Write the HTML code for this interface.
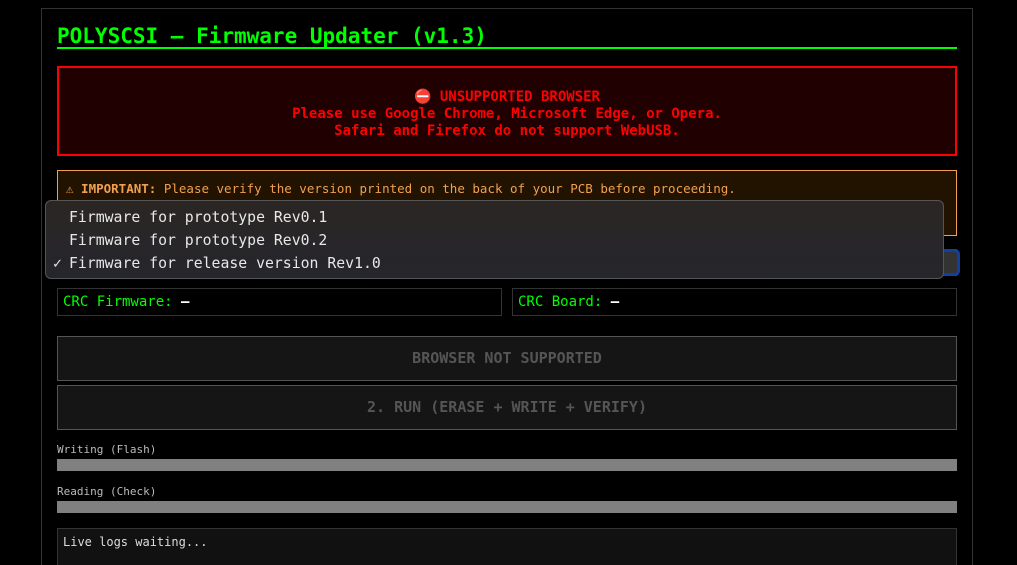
<!DOCTYPE html>
<html style="width:1017px;height:565px;overflow:hidden"><head><meta charset="utf-8"><style>
*{box-sizing:border-box;margin:0;padding:0}
body{width:1017px;height:565px;background:#000;overflow:hidden;position:relative;font-family:"DejaVu Sans Mono","Liberation Mono",monospace}
.wrap{position:absolute;left:41px;top:8px;width:932px;height:557px;border:1px solid #333;border-bottom:none;background:#000}
.abs{position:absolute}
h1{position:absolute;left:57px;top:22px;font-size:21px;font-weight:bold;color:#00ff00;line-height:28px;white-space:nowrap}
.gl{left:57px;top:47px;width:900px;height:2px;background:#00ff00}
.red{left:57px;top:66px;width:900px;height:90px;border:2px solid #ff0000;background:#200000;color:#ff0000;font-weight:bold;font-size:14px;text-align:center;line-height:17px;padding-top:21px}
.org{left:57px;top:170px;width:900px;height:66px;border:1px solid #f0a050;background:#221200;color:#f0a050;font-size:12.5px;padding:10px 8px}
.sel{left:57px;top:249px;width:900px;height:27px;border:1px solid #555;background:#111}
.focus{left:940px;top:249px;width:20px;height:27px;border:3px solid #1040a0;border-radius:5px;background:#333}
.menu{left:45px;top:200px;width:899px;height:79px;background:linear-gradient(#2b2624,#25262c);border:1px solid #555;border-radius:6px;color:#e8e8e8;font-size:14.8px;line-height:23px;padding-top:5px}
.menu div{padding-left:23px;white-space:nowrap;position:relative}
.crc{top:288px;height:28px;border:1px solid #333;background:#000;color:#00ff00;font-size:14px;line-height:27px;padding-left:5px}
.crc b{color:#fff;font-weight:bold}
.btn{left:57px;width:900px;height:45px;border:1px solid #555;background:#151515;color:#555;font-weight:bold;font-size:15px;text-align:center;line-height:43px}
.lbl{left:57px;font-size:11px;color:#bbb}
.bar{left:57px;width:900px;height:12px;background:#808080}
.log{left:57px;top:528px;width:900px;height:50px;border:1px solid #333;background:#111;color:#ddd;font-size:12px;padding:6px 5px}
</style></head><body>
<div class="wrap"></div>
<h1>POLYSCSI – Firmware Updater (v1.3)</h1>
<div class="abs gl"></div>
<div class="abs red"><div>⛔ UNSUPPORTED BROWSER</div><div>Please use Google Chrome, Microsoft Edge, or Opera.</div><div>Safari and Firefox do not support WebUSB.</div></div>
<div class="abs org"><b>⚠ IMPORTANT:</b> Please verify the version printed on the back of your PCB before proceeding.</div>
<div class="abs sel"></div>
<div class="abs focus"></div>
<div class="abs menu"><div>Firmware for prototype Rev0.1</div><div>Firmware for prototype Rev0.2</div><div><span style="position:absolute;left:7px">✓</span>Firmware for release version Rev1.0</div></div>
<div class="abs crc" style="left:57px;width:445px">CRC Firmware: <b>–</b></div>
<div class="abs crc" style="left:512px;width:445px">CRC Board: <b>–</b></div>
<div class="abs btn" style="top:336px">BROWSER NOT SUPPORTED</div>
<div class="abs btn" style="top:385px">2. RUN (ERASE + WRITE + VERIFY)</div>
<div class="abs lbl" style="top:443px">Writing (Flash)</div>
<div class="abs bar" style="top:459px"></div>
<div class="abs lbl" style="top:485px">Reading (Check)</div>
<div class="abs bar" style="top:501px"></div>
<div class="abs log">Live logs waiting...</div>
</body></html>
